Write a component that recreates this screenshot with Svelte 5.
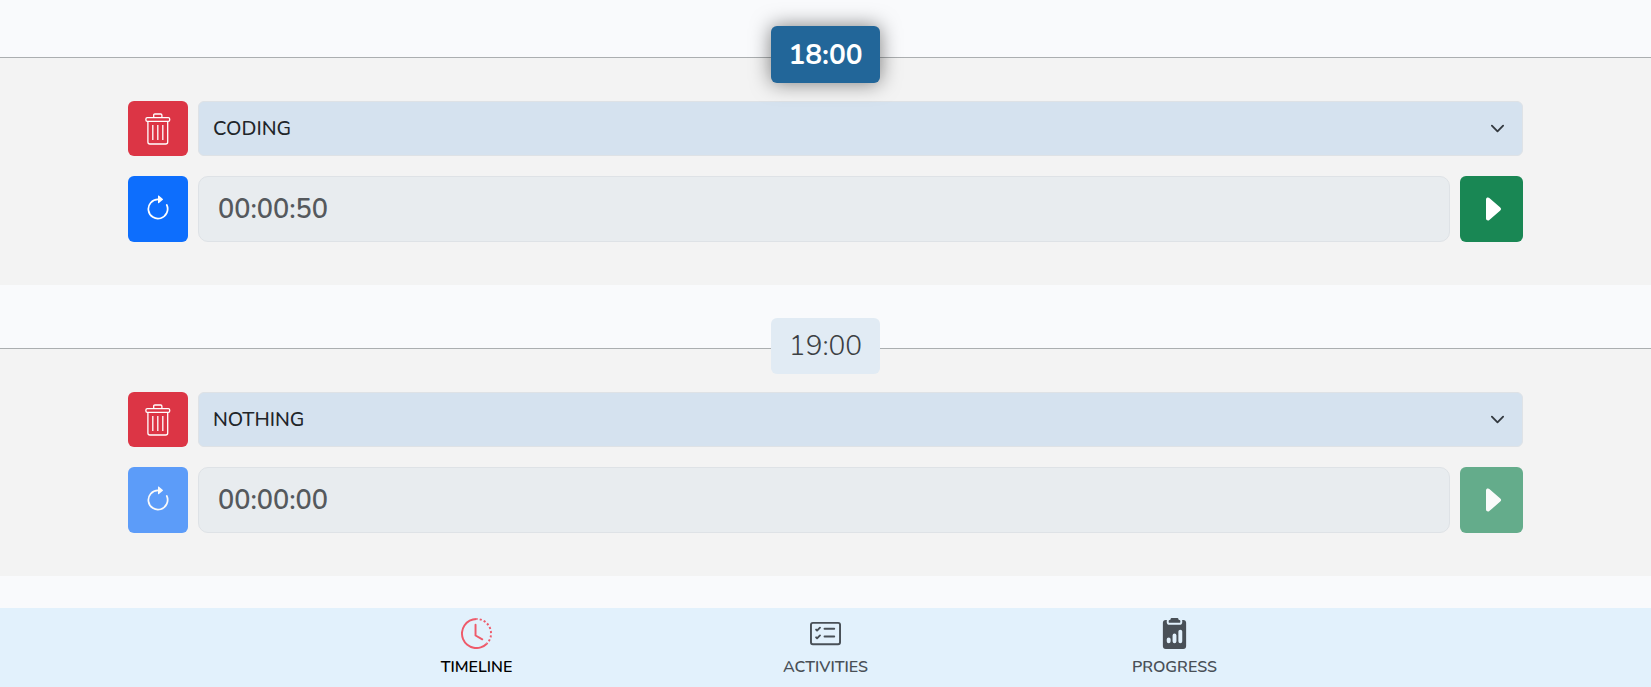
<script>
  const activities = ['CODING', 'NOTHING', 'READING', 'TRAINING'];
  let slots = $state([
    { hour: '18:00', activity: 'CODING', time: '00:00:50', current: true },
    { hour: '19:00', activity: 'NOTHING', time: '00:00:00', current: false }
  ]);
</script>

<main>
  {#each slots as slot, i}
    <section class:current={slot.current}>
      <a class="hour" href="#hour-{i}">{slot.hour}</a>
      <div class="panel">
        <div class="row">
          <button class="remove" aria-label="Remove activity">
            <svg width="26" height="32" viewBox="0 0 26 32" fill="none" stroke="currentColor" stroke-width="1.3">
              <rect x="0.9" y="4.600" width="23.800" height="3.800" rx="1.400" />
              <path d="M8.700 4.400V2.200Q8.700 1 9.900 1h5.800q1.200 0 1.200 1.200v2.200M2.900 8.600V29q0 2 2 2h15.800q2 0 2-2V8.600M7.800 12v15M12.800 12v15M17.800 12v15" />
            </svg>
          </button>
          <select aria-label="Activity at {slot.hour}" bind:value={slot.activity}>
            {#each activities as name}<option>{name}</option>{/each}
          </select>
        </div>
        <div class="row timer">
          <button class="reset" aria-label="Reset timer" disabled={!slot.current}>
            <svg width="28" height="28" viewBox="0 0 16 16" fill="currentColor">
              <path d="M8 3a5 5 0 1 0 4.546 2.914.5.5 0 0 1 .908-.417A6 6 0 1 1 8 2z" />
              <path d="M8 4.466V.534a.25.25 0 0 1 .41-.192l2.36 1.966c.12.1.12.284 0 .384L8.41 4.658A.25.25 0 0 1 8 4.466" />
            </svg>
          </button>
          <input aria-label="Elapsed time at {slot.hour}" value={slot.time} readonly />
          <button class="play" aria-label="Start timer" disabled={!slot.current}>
            <svg width="32" height="32" viewBox="0 0 16 16" fill="currentColor">
              <path d="m12.140 8.753-5.482 4.796c-.646.566-1.658.106-1.658-.753V3.204a1 1 0 0 1 1.659-.753l5.480 4.796a1 1 0 0 1 0 1.506z" />
            </svg>
          </button>
        </div>
      </div>
    </section>
  {/each}
</main>

<nav>
  <a class="active" href="#timeline">
    <svg width="31" height="31" viewBox="0 0 16 16" fill="currentColor">
      <path d="M8.515 1.019A7 7 0 0 0 8 1V0a8 8 0 0 1 .589.022zm2.004.45a7 7 0 0 0-.985-.299l.219-.976q.576.129 1.126.342zm1.370.710a7 7 0 0 0-.439-.270l.493-.870a8 8 0 0 1 .979.654l-.615.789a7 7 0 0 0-.418-.302zm1.834 1.790a7 7 0 0 0-.653-.796l.724-.690q.406.429.747.910zm.744 1.352a7 7 0 0 0-.214-.468l.893-.450a8 8 0 0 1 .450 1.088l-.950.313a7 7 0 0 0-.179-.483m.530 2.507a7 7 0 0 0-.100-1.025l.985-.170q.100.580.116 1.170zm-.131 1.538q.050-.254.081-.510l.993.123a8 8 0 0 1-.230 1.155l-.964-.267q.069-.247.120-.501m-.952 2.379q.276-.436.486-.908l.914.405q-.240.540-.555 1.038zm-.964 1.205q.183-.183.350-.378l.758.653a8 8 0 0 1-.401.432z" />
      <path d="M8 1a7 7 0 1 0 4.950 11.950l.707.707A8.001 8.001 0 1 1 8 0z" />
      <path d="M7.500 3a.5.5 0 0 1 .5.5v5.210l3.248 1.856a.5.5 0 0 1-.496.868l-3.500-2A.5.5 0 0 1 7 9V3.500a.5.5 0 0 1 .5-.5" />
    </svg>
    <span>TIMELINE</span>
  </a>
  <a href="#activities">
    <svg width="31" height="31" viewBox="0 0 16 16" fill="currentColor">
      <path d="M14.5 3a.5.5 0 0 1 .5.5v9a.5.5 0 0 1-.5.5h-13a.5.5 0 0 1-.5-.5v-9a.5.5 0 0 1 .5-.5zm-13-1A1.500 1.500 0 0 0 0 3.500v9A1.500 1.500 0 0 0 1.500 14h13a1.500 1.500 0 0 0 1.500-1.500v-9A1.500 1.500 0 0 0 14.500 2z" />
      <path d="M7 5.500a.5.5 0 0 1 .5-.5h5a.5.5 0 0 1 0 1h-5a.5.5 0 0 1-.5-.5m-1.496-.854a.5.5 0 0 1 0 .708l-1.500 1.500a.5.5 0 0 1-.708 0l-.5-.5a.5.5 0 1 1 .708-.708l.146.147 1.146-1.147a.5.5 0 0 1 .708 0M7 9.500a.5.5 0 0 1 .5-.5h5a.5.5 0 0 1 0 1h-5a.5.5 0 0 1-.5-.5m-1.496-.854a.5.5 0 0 1 0 .708l-1.500 1.500a.5.5 0 0 1-.708 0l-.5-.5a.5.5 0 0 1 .708-.708l.146.147 1.146-1.147a.5.5 0 0 1 .708 0" />
    </svg>
    <span>ACTIVITIES</span>
  </a>
  <a href="#progress">
    <svg width="31" height="31" viewBox="0 0 16 16" fill="currentColor">
      <path d="M10 .5a.5.5 0 0 0-.5-.5h-3a.5.5 0 0 0-.5.5.5.5 0 0 1-.5.5.5.5 0 0 0-.5.5V2a.5.5 0 0 0 .5.5h5A.5.5 0 0 0 11 2v-.5a.5.5 0 0 0-.5-.5.5.5 0 0 1-.5-.5" />
      <path d="M4.085 1H3.500A1.500 1.500 0 0 0 2 2.500v12A1.500 1.500 0 0 0 3.500 16h9a1.500 1.500 0 0 0 1.500-1.500v-12A1.500 1.500 0 0 0 12.500 1h-.585q.084.236.085.5V2a1.500 1.500 0 0 1-1.500 1.500h-5A1.500 1.500 0 0 1 4 2v-.5q.001-.264.085-.5M10 7a1 1 0 1 1 2 0v5a1 1 0 1 1-2 0zm-6 4a1 1 0 1 1 2 0v1a1 1 0 1 1-2 0zm4-3a1 1 0 0 1 1 1v3a1 1 0 1 1-2 0V9a1 1 0 0 1 1-1" />
    </svg>
    <span>PROGRESS</span>
  </a>
</nav>

<style>
  :global(body) {
    background: #f9fafc;
    font-family: Nunito, Lato, sans-serif;
  }
  :global(#app) {
    display: flex;
    flex-direction: column;
    min-height: 100vh;
  }
  main {
    flex: 1;
    padding-top: 26px;
  }
  section {
    display: grid;
    justify-items: center;
    margin-bottom: 33px;
  }
  section:last-child {
    margin-bottom: 32px;
  }
  .hour {
    z-index: 1;
    box-sizing: border-box;
    min-width: 109px;
    padding: 10px 16px;
    border-radius: 6px;
    background: #e1ebf4;
    color: #3c4043;
    font-size: 28px;
    font-weight: 300;
    line-height: 36px;
    text-align: center;
    text-decoration: none;
  }
  .current .hour {
    padding-top: 11px;
    background: #226699;
    color: #fff;
    font-weight: 700;
    box-shadow: 0 0 20px rgba(0, 0, 0, 0.5);
  }
  .panel {
    box-sizing: border-box;
    width: 100%;
    margin-top: -26px;
    padding: 43px 128px;
    border-top: 1px solid #abaeb0;
    background: #f3f3f3;
  }
  .row {
    display: flex;
    gap: 10px;
    height: 55px;
  }
  .timer {
    height: 66px;
    margin-top: 20px;
  }
  button {
    display: grid;
    place-items: center;
    flex: none;
    width: 60px;
    padding: 0;
    border: 0;
    border-radius: 6px;
    color: #fff;
  }
  button:disabled {
    opacity: 0.65;
  }
  .remove {
    background: #dc3545;
  }
  .reset {
    background: #0d6efd;
  }
  .play {
    width: 63px;
    background: #198754;
  }
  select,
  input {
    flex: 1;
    min-width: 0;
    box-sizing: border-box;
    border: 1px solid #dee2e6;
    font-family: inherit;
    font-weight: 600;
  }
  select {
    appearance: none;
    padding: 0 14px;
    border-radius: 6px;
    background: #d5e2ef
      url("data:image/svg+xml,%3csvg xmlns='http://www.w3.org/2000/svg' viewBox='0 0 16 16'%3e%3cpath fill='none' stroke='%23343a40' stroke-linecap='round' stroke-linejoin='round' stroke-width='2' d='m2 5 6 6 6-6'/%3e%3c/svg%3e")
      no-repeat right 17px center / 15px 15px;
    color: #212529;
    font-size: 20px;
    font-weight: 500;
  }
  input {
    padding: 0 19px;
    border-radius: 10px;
    background: #e8ecef;
    color: #55595d;
    font-size: 27px;
  }
  nav {
    position: sticky;
    bottom: 0;
    display: flex;
    justify-content: center;
    height: 79px;
    background: #e2f1fc;
  }
  nav a {
    display: flex;
    flex-direction: column;
    align-items: center;
    width: 349px;
    padding-top: 10px;
    box-sizing: border-box;
    color: #495057;
    font-size: 16px;
    font-weight: 600;
    line-height: 24px;
    text-decoration: none;
  }
  nav span {
    margin-top: 6px;
  }
  .active {
    color: #000;
  }
  .active svg {
    color: #ee5a6a;
  }
</style>
